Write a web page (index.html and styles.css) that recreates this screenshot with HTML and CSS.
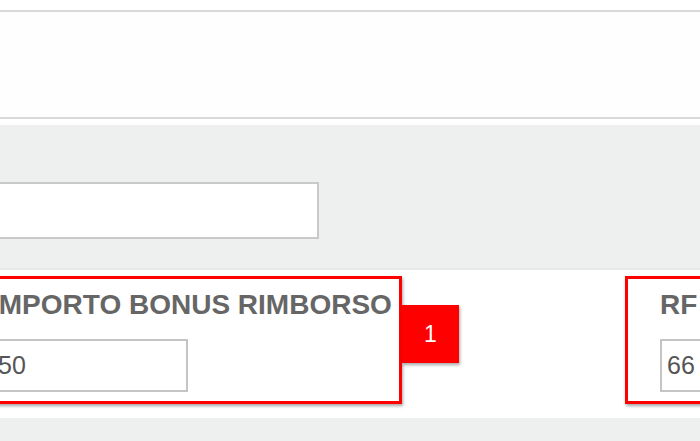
FILE: index.html
```html
<!DOCTYPE html>
<html>
<head>
    <title>Bonus Rimborso</title>
    <link rel="stylesheet" href="styles.css">
</head>
<body>
    <div class="note-field"></div>

    <div class="filter-band">
        <div class="filter-input"></div>
    </div>

    <div class="form-row">
        <div class="field-box field-left">
            <div class="field-label">IMPORTO BONUS RIMBORSO</div>
            <div class="field-input">50</div>
            <div class="badge">1</div>
        </div>
        <div class="field-box field-right">
            <div class="field-label">RF</div>
            <div class="field-input">66</div>
        </div>
    </div>

    <div class="bottom-band"></div>
</body>
</html>
```

FILE: styles.css
```css
/* Base styles */
* {
    margin: 0;
    padding: 0;
    box-sizing: border-box;
}

body {
    font-family: "Liberation Sans", Arial, sans-serif;
    background-color: #fff;
    width: 700px;
    height: 441px;
    overflow: hidden;
}

/* Top text area */
.note-field {
    margin-top: 10px;
    height: 109px;
    border-top: 2px solid #d9d9d9;
    border-bottom: 2px solid #d9d9d9;
    background-color: #fefefe;
    margin-bottom: 6px;
}

/* Filter band */
.filter-band {
    background-color: #eef0ef;
    height: 145px;
    padding-top: 57px;
    border-bottom: 2px solid #e6e8e7;
}

.filter-input {
    margin-left: -20px;
    width: 339px;
    height: 57px;
    background-color: #fff;
    border: 2px solid #c9c9c9;
}

/* Form row */
.form-row {
    display: flex;
    gap: 223px;
    padding: 6px 0 14px;
    background-color: #fff;
}

.field-box {
    position: relative;
    border: 3px solid #ff0000;
    padding: 10px 32px 9px 32px;
    box-shadow: 1px 2px 3px rgba(0,0,0,0.35);
    flex-shrink: 0;
}

.field-left {
    margin-left: -44px;
    width: 446px;
}

.field-right {
    width: 300px;
}

.field-label {
    font-size: 28px;
    line-height: 32px;
    font-weight: bold;
    color: #666;
    white-space: nowrap;
    margin-bottom: 18px;
}

.field-input {
    width: 197px;
    height: 53px;
    border: 2px solid #c4c4c4;
    padding-left: 5px;
    font-size: 25px;
    line-height: 49px;
    color: #555;
    background-color: #fff;
}

/* Annotation badge */
.badge {
    position: absolute;
    left: 443px;
    top: 26px;
    width: 57px;
    height: 58px;
    background-color: #ff0000;
    color: #fff;
    font-size: 23px;
    display: flex;
    align-items: center;
    justify-content: center;
    box-shadow: 1px 2px 3px rgba(0,0,0,0.35);
}

.bottom-band {
    background-color: #eef0ef;
    height: 30px;
}
```
